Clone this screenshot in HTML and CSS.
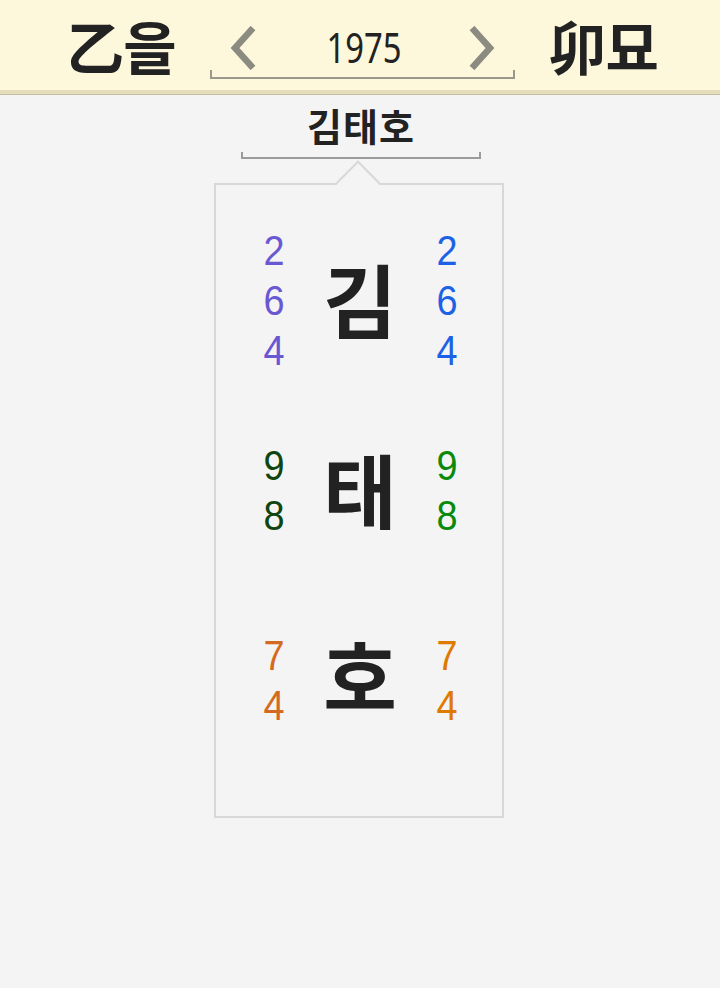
FILE: index.html
```html
<!DOCTYPE html>
<html lang="ko">
<head>
<meta charset="utf-8">
<link rel="stylesheet" href="styles.css">
</head>
<body>
<header class="top">
  <div class="gz">乙을</div>
  <div class="year">
    <div class="year-row">
      <svg class="chev" width="30" height="44" viewBox="0 0 30 44"><polyline points="25,2 7,22 25,42" fill="none" stroke="#8c8b82" stroke-width="6.5"/></svg>
      <span class="year-num">1975</span>
      <svg class="chev" width="30" height="44" viewBox="0 0 30 44"><polyline points="5,2 23,22 5,42" fill="none" stroke="#8c8b82" stroke-width="6.5"/></svg>
    </div>
    <div class="year-line"></div>
  </div>
  <div class="gz">卯묘</div>
</header>
<main class="main">
  <div class="name">김태호</div>
  <div class="bracket"></div>
  <div class="card">
    <div class="notch"></div>
    <div class="row">
      <div class="nums c-l1"><span>2</span><span>6</span><span>4</span></div>
      <div class="ch">김</div>
      <div class="nums c-r1"><span>2</span><span>6</span><span>4</span></div>
    </div>
    <div class="row">
      <div class="nums c-l2"><span>9</span><span>8</span></div>
      <div class="ch">태</div>
      <div class="nums c-r2"><span>9</span><span>8</span></div>
    </div>
    <div class="row">
      <div class="nums c-l3"><span>7</span><span>4</span></div>
      <div class="ch ch-up">호</div>
      <div class="nums c-r3"><span>7</span><span>4</span></div>
    </div>
  </div>
</main>
</body>
</html>
```
FILE: styles.css
```css
html, body {
  margin: 0;
  padding: 0;
  background: #f4f4f4;
  font-family: "Noto Sans CJK KR", "Noto Sans", sans-serif;
  color: #222;
}
.top {
  height: 90px;
  background: #fdf7dc;
  border-bottom: 4px solid #e5dcbc;
  box-shadow: 0 1px 0 #c7bfa5;
  display: flex;
  align-items: center;
  justify-content: center;
  gap: 34px;
  padding-left: 4px;
}
.gz {
  font-size: 58px;
  font-weight: 700;
  line-height: 90px;
  letter-spacing: -1px;
  color: #222;
}
.year {
  width: 305px;
  align-self: flex-start;
  margin-top: 25px;
  display: flex;
  flex-direction: column;
}
.year-row {
  height: 45px;
  display: flex;
  align-items: center;
  justify-content: space-between;
  padding: 0 18px;
}
.chev { display: block; }
.year-num {
  font-family: "Noto Sans", sans-serif;
  font-size: 41px;
  line-height: 45px;
  color: #222;
  transform: scaleX(0.8);
  margin-left: 4px;
}
.year-line {
  height: 7px;
  border: 2px solid #9a988a;
  border-top: none;
}
.main {
  display: flex;
  flex-direction: column;
  align-items: center;
  padding-left: 2px;
}
.name {
  font-size: 38px;
  font-weight: 700;
  line-height: 46px;
  margin-top: 8px;
  letter-spacing: 1px;
  color: #222;
}
.bracket {
  width: 240px;
  height: 7px;
  border: 2px solid #9b9b9b;
  border-top: none;
  box-sizing: border-box;
  margin-top: 4px;
}
.card {
  width: 290px;
  height: 635px;
  margin-top: 24px;
  margin-left: -4px;
  border: 2px solid #d8d8d8;
  box-sizing: border-box;
  position: relative;
  padding-top: 20px;
}
.notch {
  position: absolute;
  width: 32px;
  height: 32px;
  left: 126px;
  top: -18px;
  background: #f4f4f4;
  border-top: 2px solid #d8d8d8;
  border-left: 2px solid #d8d8d8;
  transform: rotate(45deg);
  box-sizing: border-box;
}
.row {
  height: 190px;
  display: grid;
  grid-template-columns: 60px 112px 68px;
  padding-left: 28px;
  align-items: center;
}
.nums {
  display: flex;
  flex-direction: column;
  align-items: center;
  font-family: "Liberation Sans", sans-serif;
  font-size: 43px;
  line-height: 50px;
}
.nums span { transform: scaleX(0.88); }
.nums.c-r1, .nums.c-r2, .nums.c-r3 { margin-left: -6px; }
.ch {
  text-align: center;
  font-size: 80px;
  font-weight: 700;
  line-height: 100px;
  color: #222;
  margin-top: -6px;
}
.ch-up { margin-top: -14px; }
.c-l1 { color: #6a58d2; }
.c-r1 { color: #1d62e6; }
.c-l2 { color: #0f4510; }
.c-r2 { color: #0a8a0a; }
.c-l3 { color: #d46a22; }
.c-r3 { color: #df7a00; }
```
